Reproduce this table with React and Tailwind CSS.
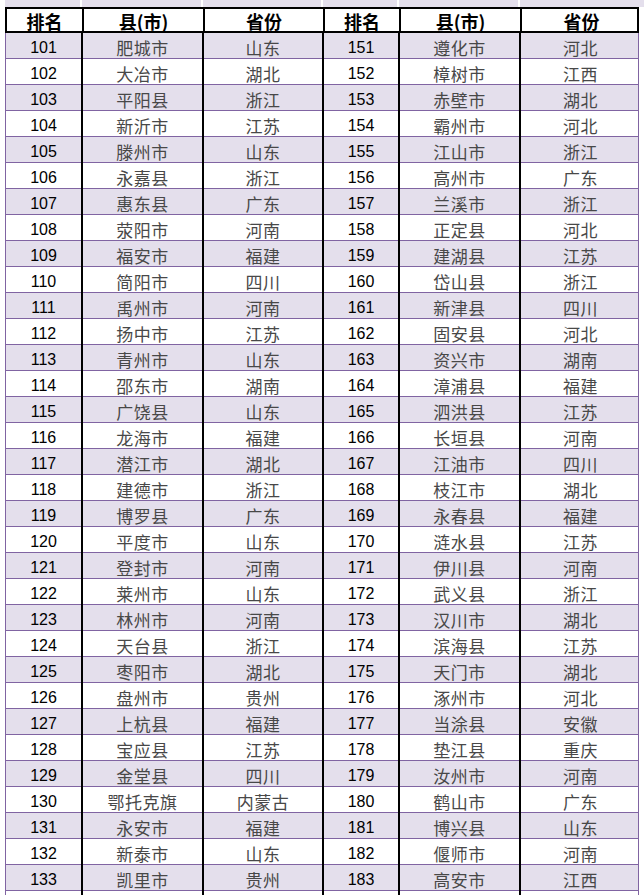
import React from 'react';

const left = [
  ['101', '肥城市', '山东'], ['102', '大冶市', '湖北'], ['103', '平阳县', '浙江'], ['104', '新沂市', '江苏'],
  ['105', '滕州市', '山东'], ['106', '永嘉县', '浙江'], ['107', '惠东县', '广东'], ['108', '荥阳市', '河南'],
  ['109', '福安市', '福建'], ['110', '简阳市', '四川'], ['111', '禹州市', '河南'], ['112', '扬中市', '江苏'],
  ['113', '青州市', '山东'], ['114', '邵东市', '湖南'], ['115', '广饶县', '山东'], ['116', '龙海市', '福建'],
  ['117', '潜江市', '湖北'], ['118', '建德市', '浙江'], ['119', '博罗县', '广东'], ['120', '平度市', '山东'],
  ['121', '登封市', '河南'], ['122', '莱州市', '山东'], ['123', '林州市', '河南'], ['124', '天台县', '浙江'],
  ['125', '枣阳市', '湖北'], ['126', '盘州市', '贵州'], ['127', '上杭县', '福建'], ['128', '宝应县', '江苏'],
  ['129', '金堂县', '四川'], ['130', '鄂托克旗', '内蒙古'], ['131', '永安市', '福建'], ['132', '新泰市', '山东'],
  ['133', '凯里市', '贵州'],
];

const right = [
  ['151', '遵化市', '河北'], ['152', '樟树市', '江西'], ['153', '赤壁市', '湖北'], ['154', '霸州市', '河北'],
  ['155', '江山市', '浙江'], ['156', '高州市', '广东'], ['157', '兰溪市', '浙江'], ['158', '正定县', '河北'],
  ['159', '建湖县', '江苏'], ['160', '岱山县', '浙江'], ['161', '新津县', '四川'], ['162', '固安县', '河北'],
  ['163', '资兴市', '湖南'], ['164', '漳浦县', '福建'], ['165', '泗洪县', '江苏'], ['166', '长垣县', '河南'],
  ['167', '江油市', '四川'], ['168', '枝江市', '湖北'], ['169', '永春县', '福建'], ['170', '涟水县', '江苏'],
  ['171', '伊川县', '河南'], ['172', '武义县', '浙江'], ['173', '汉川市', '湖北'], ['174', '滨海县', '江苏'],
  ['175', '天门市', '湖北'], ['176', '涿州市', '河北'], ['177', '当涂县', '安徽'], ['178', '垫江县', '重庆'],
  ['179', '汝州市', '河南'], ['180', '鹤山市', '广东'], ['181', '博兴县', '山东'], ['182', '偃师市', '河南'],
  ['183', '高安市', '江西'],
];

const cols = 'grid grid-cols-[75px_121px_120px_76px_121px_121px]';
const num = "font-['Liberation_Sans',sans-serif] text-[16px] text-black";
const cjk = "font-['Noto_Sans_CJK_SC',sans-serif] font-normal text-[17px] tracking-[0.5px] text-[#484848]";
const head = "font-['Noto_Sans_CJK_SC',sans-serif] font-bold text-[18px] text-black";

const Cell = ({ children, className, first }) => (
  <div className={'flex items-center justify-center pt-[2px] ' + (first ? '' : 'border-l-2 border-black ') + className}>
    {children}
  </div>
);

export default function App() {
  return (
    <div className="w-[644px] h-[895px] overflow-hidden bg-white">
      <div className="pl-[5px]">
        <div className={cols + ' h-[7px] bg-[#e4dfec]'}>
          {[0, 1, 2, 3, 4, 5].map(i => (
            <div key={i} className={i ? 'border-l-2 border-white' : ''} />
          ))}
        </div>

        <div className={cols + ' h-[26px] border-2 border-black bg-white w-[634px] box-border'}>
          {['排名', '县(市)', '省份', '排名', '县(市)', '省份'].map((t, i) => (
            <Cell key={i} first={i === 0} className={head + ' pt-0 leading-none'}>{t}</Cell>
          ))}
        </div>

        {left.map((row, r) => {
          const cells = [...row, ...right[r]];
          const shade = r % 2 === 0 ? 'bg-[#e4dfec]' : 'bg-white';
          return (
            <div key={r} className={cols + ' h-[26px] border-x border-b border-[#8064a2] w-[634px] ' + shade}>
              {cells.map((t, i) => (
                <Cell key={i} first={i === 0} className={i % 3 === 0 ? num : cjk}>{t}</Cell>
              ))}
            </div>
          );
        })}

        <div className={cols + ' h-[10px] border-x border-[#8064a2] w-[634px] bg-white'}>
          {[0, 1, 2, 3, 4, 5].map(i => (
            <div key={i} className={i ? 'border-l-2 border-black' : ''} />
          ))}
        </div>
      </div>
    </div>
  );
}
